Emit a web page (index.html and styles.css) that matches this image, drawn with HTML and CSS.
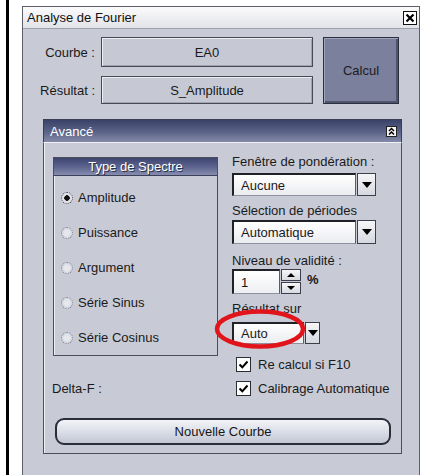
FILE: index.html
```html
<!DOCTYPE html>
<html lang="fr">
<head>
<meta charset="utf-8">
<title>Analyse de Fourier</title>
<link rel="stylesheet" href="styles.css">
</head>
<body>
<div class="page">
  <div class="rule"></div>
  <div class="window">
    <div class="titlebar">
      <span class="title">Analyse de Fourier</span>
      <span class="close">
        <svg width="14" height="14" viewBox="0 0 14 14"><rect x="0.5" y="0.5" width="13" height="13" fill="#fff" stroke="#111"/><path d="M3.5 3.5 L10.5 10.5 M10.5 3.5 L3.5 10.5" stroke="#000" stroke-width="2.2"/></svg>
      </span>
    </div>

    <div class="top">
      <label class="lbl">Courbe :</label>
      <div class="field">EA0</div>
      <button class="calc">Calcul</button>
      <label class="lbl">Résultat :</label>
      <div class="field">S_Amplitude</div>
    </div>

    <div class="panel">
      <div class="panel-head">
        <span>Avancé</span>
        <span class="collapse">
          <svg width="11" height="11" viewBox="0 0 11 11"><rect x="0.5" y="0.5" width="10" height="10" fill="#f4f4f6" stroke="#222"/><path d="M3 5 L5.5 2.5 L8 5 M3 8.5 L5.5 6 L8 8.5" fill="none" stroke="#000" stroke-width="1.5"/></svg>
        </span>
      </div>
      <div class="panel-body">
        <div class="grid">
          <div class="group">
            <div class="group-head">Type de Spectre</div>
            <ul class="radios">
              <li><span class="radio on"></span>Amplitude</li>
              <li><span class="radio"></span>Puissance</li>
              <li><span class="radio"></span>Argument</li>
              <li><span class="radio"></span>Série Sinus</li>
              <li><span class="radio"></span>Série Cosinus</li>
            </ul>
          </div>

          <div class="controls">
            <div class="cap">Fenêtre de pondération :</div>
            <div class="combo c-wide"><span class="combo-val">Aucune</span><span class="combo-btn"><i class="tri"></i></span></div>
            <div class="cap cap2">Sélection de périodes</div>
            <div class="combo c-wide c-tall"><span class="combo-val">Automatique</span><span class="combo-btn"><i class="tri"></i></span></div>
            <div class="cap cap3">Niveau de validité :</div>
            <div class="spin-row">
              <span class="spin-val">1</span>
              <span class="spin-btns"><span class="sb"><i class="tri-s up"></i></span><span class="sb"><i class="tri-s"></i></span></span>
              <span class="pct">%</span>
            </div>
            <div class="cap cap4">Résultat sur</div>
            <div class="mark-wrap">
              <div class="combo c-short"><span class="combo-val">Auto</span><span class="combo-btn"><i class="tri"></i></span></div>
              <svg class="mark" width="96" height="42" viewBox="0 0 96 42"><ellipse cx="48" cy="21" rx="43" ry="17.5" fill="none" stroke="#e2141b" stroke-width="4.5"/></svg>
            </div>
          </div>

          <div class="check cb1"><span class="box"><svg width="15" height="15" viewBox="0 0 15 15"><path d="M3.5 7.5 L6.3 10.3 L11.5 4.5" fill="none" stroke="#000" stroke-width="2"/></svg></span>Re calcul si F10</div>
          <div class="delta">Delta-F :</div>
          <div class="check cb2"><span class="box"><svg width="15" height="15" viewBox="0 0 15 15"><path d="M3.5 7.5 L6.3 10.3 L11.5 4.5" fill="none" stroke="#000" stroke-width="2"/></svg></span>Calibrage Automatique</div>
        </div>
        <button class="new">Nouvelle Courbe</button>
      </div>
    </div>
  </div>
</div>
</body>
</html>
```

FILE: styles.css
```css
* { box-sizing: border-box; }

body {
  margin: 0;
  background: #fff;
  font-family: "Liberation Sans", Arial, sans-serif;
  font-size: 13px;
  color: #151515;
}

.page {
  display: flex;
  align-items: flex-start;
  height: 475px;
  overflow: hidden;
  padding-left: 6px;
}

.rule {
  width: 3px;
  height: 100%;
  flex: none;
  background: #000;
}

.window {
  flex: none;
  width: 398px;
  margin: 6px 0 0 13px;
  border: 1px solid #5d606a;
  background: #c8cbd6;
  padding-bottom: 60px;
}

/* title bar */
.titlebar {
  height: 22px;
  display: flex;
  align-items: center;
  justify-content: space-between;
  padding: 0 2px 0 4px;
  background: linear-gradient(#fbfbfc, #e2e3e8);
  border-bottom: 1px solid #9ea1ac;
}
.title { color: #111; }
.close { display: flex; }

/* Courbe / Résultat block */
.top {
  display: grid;
  grid-template-columns: 72px 212px 80px;
  grid-template-rows: 30px 28px;
  column-gap: 6px;
  row-gap: 9px;
  margin-top: 8px;
}
.lbl {
  align-self: center;
  text-align: right;
  color: #1a1a1a;
}
.field {
  display: flex;
  align-items: center;
  justify-content: center;
  background: #c6c9d4;
  border: 1px solid #474a55;
  box-shadow: inset 1px 1px 0 #eceef3, inset -1px -1px 0 #a2a5b1;
  color: #1a1a1a;
}
.calc {
  grid-column: 3;
  grid-row: 1 / span 2;
  margin-left: 4px;
  font: inherit;
  color: #1c1c22;
  background: #7b809d;
  border: 1px solid #2c2f3c;
  box-shadow: inset 1px 1px 0 #a0a4bb, inset -2px -2px 0 #4e5370;
  padding: 0;
}

/* Avancé panel */
.panel {
  margin: 15px 17px 0 20px;
}
.panel-head {
  height: 23px;
  display: flex;
  align-items: center;
  justify-content: space-between;
  padding: 0 4px 0 6px;
  color: #fff;
  background: linear-gradient(#3a4269, #5b6388 55%, #8489a6);
  border: 1px solid #3a3e52;
  border-bottom: none;
}
.collapse { display: flex; }
.panel-body {
  border: 1px solid #4b4f5c;
  border-top: 1px solid #eef0f5;
  box-shadow: inset 1px 0 0 #eef0f5;
  padding: 14px 9px 8px 9px;
}

.grid {
  display: grid;
  grid-template-columns: 165px 1fr;
  column-gap: 14px;
  align-items: start;
}

/* Type de Spectre group */
.group {
  grid-column: 1;
  grid-row: 1;
  height: 199px;
  border: 1px solid #4a4e5b;
  box-shadow: inset 1px 1px 0 #eef0f5;
}
.group-head {
  height: 18px;
  display: flex;
  align-items: center;
  justify-content: center;
  color: #fff;
  text-shadow: 1px 1px 0 #2a2f48;
  background: linear-gradient(#3c4470, #5e6690 55%, #878db0);
  border-bottom: 1px solid #3b3f58;
}
.radios {
  list-style: none;
  margin: 0;
  padding: 4px 0 0 7px;
}
.radios li {
  height: 35px;
  display: flex;
  align-items: center;
  gap: 5px;
  color: #1a1a1a;
}
.radio {
  width: 12px;
  height: 12px;
  border-radius: 50%;
  border: 1px dotted #7b7e88;
  background: radial-gradient(circle, #e6e8ee 35%, #c4c7d2 100%);
}
.radio.on {
  border: 1px dotted #3a3d48;
  background: radial-gradient(circle, #111 0 2.5px, #dfe1e7 3px);
}

/* right column */
.controls {
  grid-column: 2;
  grid-row: 1;
  margin-top: -3px;
  display: flex;
  flex-direction: column;
  align-items: flex-start;
}
.cap { line-height: 16px; color: #1a1a1a; }
.cap2 { margin-top: 7px; }
.cap3 { margin-top: 9px; }
.cap4 { margin-top: 7px; }

.combo {
  display: flex;
  height: 23px;
  margin-top: 3px;
}
.c-tall { height: 24px; margin-top: 1px; }
.c-wide { width: 144px; }
.c-short { width: 88px; height: 22px; margin-top: 0; }
.combo-val {
  flex: 1;
  display: flex;
  align-items: center;
  padding-left: 7px;
  background: linear-gradient(#ffffff, #ebecf0);
  border-top: 2px solid #202228;
  border-left: 2px solid #202228;
  border-bottom: 1px solid #8e919c;
  border-right: 1px solid #5a5d68;
  color: #1a1a1a;
}
.combo-btn {
  width: 19px;
  margin-left: 1px;
  display: flex;
  align-items: center;
  justify-content: center;
  background: linear-gradient(#f6f6f8, #d6d8e0);
  border: 1px solid #3c3f4a;
}
.c-short .combo-btn { width: 15px; }
.tri {
  width: 0;
  height: 0;
  border-left: 5px solid transparent;
  border-right: 5px solid transparent;
  border-top: 6px solid #000;
}

/* spinner */
.spin-row {
  display: flex;
  align-items: center;
  height: 25px;
}
.spin-val {
  width: 48px;
  height: 25px;
  display: flex;
  align-items: center;
  padding-left: 7px;
  background: linear-gradient(#ffffff, #eeeff2);
  border-top: 2px solid #202228;
  border-left: 2px solid #202228;
  border-bottom: 1px solid #8e919c;
  border-right: 1px solid #5a5d68;
}
.spin-btns {
  display: flex;
  flex-direction: column;
  gap: 1px;
  margin-left: 1px;
  height: 25px;
}
.sb {
  width: 20px;
  flex: 1;
  display: flex;
  align-items: center;
  justify-content: center;
  background: linear-gradient(#f6f6f8, #d8dae1);
  border: 1px solid #3c3f4a;
}
.tri-s {
  width: 0;
  height: 0;
  border-left: 4px solid transparent;
  border-right: 4px solid transparent;
  border-top: 4px solid #000;
}
.tri-s.up {
  border-top: none;
  border-bottom: 4px solid #000;
}
.pct {
  margin-left: 6px;
  font-weight: bold;
  align-self: flex-start;
  margin-top: 3px;
}

/* red ring drawn over the Auto combo */
.mark-wrap {
  position: relative;
  margin-top: 5px;
}
.mark {
  position: absolute;
  left: -20px;
  top: -14px;
}

/* checkboxes */
.check {
  grid-column: 2;
  display: flex;
  align-items: center;
  gap: 7px;
  height: 15px;
  padding-left: 4px;
  color: #1a1a1a;
}
.cb1 { grid-row: 2; margin-top: 1px; }
.cb2 { grid-row: 3; margin-top: 9px; }
.box {
  width: 15px;
  height: 15px;
  display: flex;
  background: #fff;
  border: 1px solid #2b2d35;
}
.box svg { margin: -1px; }
.delta {
  grid-column: 1;
  grid-row: 3;
  margin-top: 9px;
  line-height: 15px;
  margin-left: -1px;
  color: #1a1a1a;
}

/* Nouvelle Courbe */
.new {
  display: block;
  width: calc(100% - 3px);
  margin: 22px 0 0 2px;
  height: 27px;
  font: inherit;
  color: #161616;
  border: 2px solid #2a2d39;
  border-radius: 9px;
  background: linear-gradient(#f3f4f8, #d7dae4 60%, #c3c7d4);
  padding: 0;
}
```
